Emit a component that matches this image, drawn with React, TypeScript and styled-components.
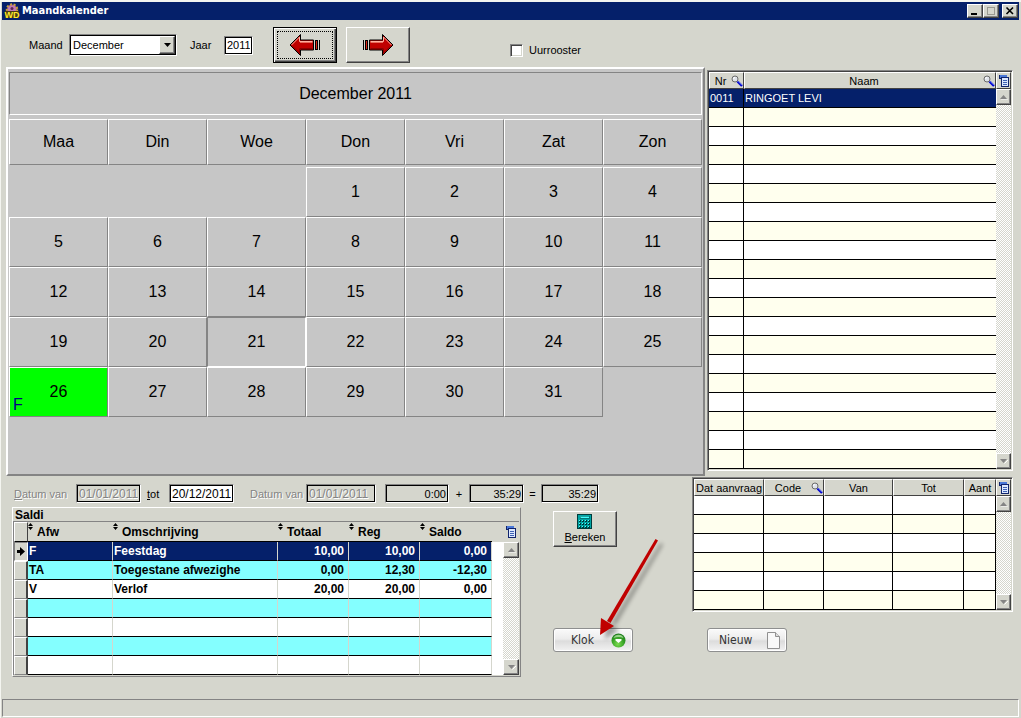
import React, { useState } from 'react';
import styled, { createGlobalStyle, css } from 'styled-components';

const face = '#d5d6cd';
const navy = '#05206a';
const shade = '#848484';
const dark = '#424242';
const panel = '#c6c6c6';
const sans = '"Liberation Sans", Arial, sans-serif';
const caption = '"DejaVu Sans Condensed", "Liberation Sans", sans-serif';

const GlobalStyle = createGlobalStyle`
  *, *::before, *::after { box-sizing: border-box; }
  body { margin: 0; background: ${face}; font: 11px/14px ${sans}; color: #000; }
  button, input, select { font: inherit; color: inherit; margin: 0; }
`;

const raised = css`
  background: ${face};
  border: 1px solid;
  border-color: #fff ${dark} ${dark} #fff;
  box-shadow: inset -1px -1px 0 ${shade};
`;

const Window = styled.div`
  display: flex;
  flex-direction: column;
  min-height: 100vh;
  padding: 2px 2px 1px;
  box-shadow: inset 0 2px 0 #f4f5f0, inset 1px 0 0 #f4f5f0;
`;

const TitleBar = styled.header`
  display: flex;
  align-items: center;
  height: 18px;
  padding: 0 1px 0 2px;
  background: ${navy};
  color: #fff;
`;

const TitleText = styled.h1`
  flex: 1;
  margin: 0 0 0 2px;
  font: bold 11px/18px ${caption};
`;

const CaptionButton = styled.button<{ $apart?: boolean }>`
  ${raised}
  display: grid;
  place-items: center;
  width: 16px;
  height: 14px;
  padding: 0;
  margin-left: ${p => (p.$apart ? 3 : 0)}px;
`;

const Toolbar = styled.div`
  display: flex;
  align-items: center;
  height: 47px;
  padding: 3px 0 0 27px;
`;

const ToolLabel = styled.label<{ $width: number; $gap?: number }>`
  width: ${p => p.$width}px;
  margin-left: ${p => p.$gap ?? 0}px;
`;

const SelectBox = styled.div`
  display: grid;
  grid-template-columns: 1fr 16px;
  width: 108px;
  margin-right: -1px;
  height: 22px;
  border: 1px solid;
  border-color: ${shade} #fff #fff ${shade};
  padding: 1px;
  background: #fff;
  box-shadow: inset 0 0 0 1px #000;
`;

const Select = styled.select`
  grid-area: 1 / 1 / 2 / 3;
  appearance: none;
  border: 0;
  outline: 0;
  background: transparent;
  padding: 0 18px 0 2px;
  min-width: 0;
`;

const SelectArrow = styled.span`
  ${raised}
  grid-area: 1 / 2;
  display: grid;
  place-items: center;
  pointer-events: none;
`;

const Field = styled.input<{ $width: number; $big?: boolean; $right?: boolean; $flat?: boolean }>`
  width: ${p => p.$width}px;
  height: 19px;
  padding: 0 2px;
  border: 1px solid;
  border-color: ${shade} #fff #fff ${shade};
  border-radius: 0;
  outline: 0;
  background: ${p => (p.$flat ? face : '#fff')};
  box-shadow: inset 0 0 0 1px #000;
  font-size: ${p => (p.$big ? 12 : 11)}px;
  text-align: ${p => (p.$right ? 'right' : 'left')};
  &:disabled { color: ${shade}; text-shadow: 1px 1px 0 #fff; }
`;

const PushButton = styled.button<{ $default?: boolean; $gap?: number }>`
  ${raised}
  display: flex;
  flex-direction: column;
  align-items: center;
  justify-content: center;
  width: 64px;
  height: 36px;
  padding: 0;
  margin-left: ${p => p.$gap ?? 0}px;
  ${p => p.$default && css`
    border-color: #000;
    box-shadow: inset 1px 1px 0 #fff, inset -1px -1px 0 ${dark}, inset -2px -2px 0 ${shade};
    outline: 1px dotted #000;
    outline-offset: -5px;
  `}
`;

const CheckLabel = styled.label`
  display: flex;
  align-items: center;
  gap: 6px;
  margin-left: 100px;
  padding-top: 10px;
`;

const CheckBox = styled.input`
  appearance: none;
  width: 13px;
  height: 13px;
  background: #fff;
  border: 1px solid;
  border-color: ${shade} #fff #fff ${shade};
  box-shadow: inset 1px 1px 0 ${dark}, inset -1px -1px 0 ${face};
  &:checked { background: radial-gradient(#000 3px, #fff 3px); }
`;

const Upper = styled.div`
  display: flex;
  align-items: flex-start;
  gap: 2px;
  padding: 0 6px 0 4px;
`;

const Calendar = styled.section`
  flex: 1;
  min-height: 409px;
  padding: 3px 1px;
  background: ${panel};
  border: 2px solid;
  border-color: #fff ${shade} ${shade} #fff;
  font-size: 16px;
  line-height: 20px;
`;

const MonthTitle = styled.h2`
  display: grid;
  place-items: center;
  height: 43px;
  margin: 0 0 4px;
  border: 1px solid;
  border-color: ${shade} #fff #fff ${shade};
  font: inherit;
`;

const Week = styled.div<{ $head?: boolean }>`
  display: grid;
  grid-template-columns: repeat(7, 1fr);
  grid-auto-rows: ${p => (p.$head ? 46 : 50)}px;
  margin-bottom: ${p => (p.$head ? 2 : 0)}px;
`;

const WeekDay = styled.div`
  display: grid;
  place-items: center;
  border: 1px solid;
  border-color: #fff ${shade} ${shade} #fff;
`;

const Day = styled.button<{ $today?: boolean; $holiday?: boolean; $start?: number }>`
  position: relative;
  padding: 0;
  background: ${p => (p.$holiday ? '#00ff00' : 'transparent')};
  border: 1px solid;
  border-color: ${p => (p.$today ? `${shade} #fff #fff ${shade}` : `#fff ${shade} ${shade} #fff`)};
  ${p => p.$start && css`grid-column-start: ${p.$start};`}
`;

const DayCode = styled.span`
  position: absolute;
  left: 3px;
  bottom: 1px;
  color: #000084;
  line-height: 20px;
`;

const GridFrame = styled.div<{ $width: number; $top: number }>`
  display: flex;
  width: ${p => p.$width}px;
  margin-top: ${p => p.$top}px;
  padding: 1px;
  border: 1px solid;
  border-color: ${shade} #fff #fff ${shade};
  box-shadow: inset 1px 1px 0 ${dark}, inset -1px -1px 0 ${face};
`;

const Grid = styled.table`
  flex: 1;
  width: 0;
  table-layout: fixed;
  border-collapse: separate;
  border-spacing: 0;
`;

const HeadCell = styled.th`
  height: 17px;
  padding: 0;
  font-weight: normal;
  background: ${face};
  border: 1px solid;
  border-color: #fff ${dark} ${dark} #fff;
  white-space: nowrap;
`;

const HeadInner = styled.div`
  display: flex;
  align-items: center;
  justify-content: center;
  height: 15px;
  overflow: hidden;
`;

const HeadText = styled.span`
  flex: 1;
  text-align: center;
`;

const Row = styled.tr<{ $cream?: boolean; $active?: boolean }>`
  background: ${p => (p.$active ? navy : p.$cream ? '#ffffee' : '#fff')};
  color: ${p => (p.$active ? '#fff' : '#000')};
`;

const Cell = styled.td<{ $open?: boolean }>`
  height: 19px;
  padding: 0 1px;
  line-height: 18px;
  border-bottom: 1px solid #000;
  border-right: ${p => (p.$open ? 0 : 1)}px solid #000;
`;

const ScrollColumn = styled.div<{ $width: number }>`
  display: flex;
  flex-direction: column;
  width: ${p => p.$width}px;
`;

const MenuButton = styled.button<{ $plain?: boolean }>`
  display: grid;
  place-items: center;
  height: ${p => (p.$plain ? 20 : 17)}px;
  padding: 0;
  background: ${face};
  border: ${p => (p.$plain ? 0 : 1)}px solid;
  border-color: #fff ${dark} ${dark} #fff;
`;

const Track = styled.div`
  flex: 1;
  display: flex;
  flex-direction: column;
  justify-content: space-between;
  background: repeating-conic-gradient(#fff 0 25%, ${face} 0 50%) 0 0 / 2px 2px;
`;

const ScrollButton = styled.button`
  ${raised}
  display: grid;
  place-items: center;
  height: 16px;
  padding: 0;
`;

const Lower = styled.div`
  display: flex;
  flex: 1;
  align-items: flex-start;
  padding: 1px 6px 0 10px;
`;

const LowerLeft = styled.div`
  flex: 1;
`;

const Totals = styled.div`
  display: flex;
  align-items: center;
  padding: 7px 0 4px 2px;
`;

const DateLabel = styled.label<{ $width: number; $indent?: number; $dim?: boolean }>`
  width: ${p => p.$width}px;
  padding-left: ${p => p.$indent ?? 0}px;
  white-space: nowrap;
  ${p => p.$dim && css`color: ${shade}; text-shadow: 1px 1px 0 #fff;`}
`;

const Operator = styled.span<{ $width: number }>`
  width: ${p => p.$width}px;
  text-align: center;
`;

const Work = styled.div`
  display: flex;
  gap: 32px;
`;

const Balance = styled.section`
  flex: 1;
  border: 1px solid;
  border-color: #fff ${shade} ${shade} #fff;
  padding: 0 1px 1px 0;
  font-size: 12px;
  font-weight: bold;
`;

const BalanceTitle = styled.h2`
  height: 13px;
  margin: 0;
  padding-left: 2px;
  font: bold 12px/14px ${sans};
`;

const BalanceBody = styled.div`
  display: flex;
  border: 1px solid ${shade};
  border-width: 1px 0 0 1px;
`;

const BalanceHead = styled.th`
  height: 20px;
  padding: 0;
  border-bottom: 1px solid #000;
  text-align: left;
  white-space: nowrap;
`;

const SortHead = styled.div`
  display: flex;
  align-items: flex-start;
  gap: 4px;
  height: 19px;
  line-height: 20px;
`;

const SelectorCell = styled.td<{ $active?: boolean }>`
  height: 19px;
  padding: 0;
  color: #000;
  background: ${face};
  border: 1px solid;
  border-color: ${p => (p.$active ? `${shade} #fff #fff ${shade}` : `#fff ${dark} ${shade} #fff`)};
  border-right-width: ${p => (p.$active ? 1 : 2)}px;
  line-height: 0;
`;

const SelectorHead = styled.th`
  height: 20px;
  padding: 0;
  border: 1px solid;
  border-color: #fff ${dark} #000 #fff;
`;

const BalanceRow = styled.tr<{ $tint?: boolean; $active?: boolean }>`
  background: ${p => (p.$active ? navy : p.$tint ? '#84ffff' : '#fff')};
  color: ${p => (p.$active ? '#fff' : '#000')};
`;

const BalanceCell = styled.td<{ $num?: boolean }>`
  height: 19px;
  padding: 0 ${p => (p.$num ? 4 : 1)}px 0 1px;
  line-height: 18px;
  text-align: ${p => (p.$num ? 'right' : 'left')};
  white-space: nowrap;
  border-bottom: 1px solid #000;
  border-right: 1px solid ${face};
`;

const Gutter = styled.div`
  width: 11px;
  margin-top: 20px;
  background: #fff;
`;

const SideColumn = styled.div`
  position: relative;
  display: flex;
  flex-direction: column;
  gap: 81px;
  width: 139px;
  padding-top: 4px;
`;

const SoftButton = styled.button`
  display: flex;
  align-items: center;
  justify-content: space-between;
  width: 80px;
  height: 24px;
  padding: 0 6px 0 11px;
  border: 1px solid #8e8f8f;
  border-radius: 3px;
  background: linear-gradient(#fafafa, #ececec 45%, #dcdcdc 55%, #f2f2f2);
  box-shadow: inset 0 0 0 1px #fff;
  font: 12px/16px ${caption};
  color: #333;
`;

const KlokButton = styled(SoftButton)`
  padding-left: 17px;
`;

const Pointer = styled.svg`
  position: absolute;
  left: 42px;
  top: 28px;
  pointer-events: none;
`;

const RequestColumn = styled.div`
  display: flex;
  flex-direction: column;
  gap: 16px;
`;

const RequestActions = styled.div`
  padding-left: 15px;
`;

const StatusBar = styled.footer`
  height: 18px;
  border: 1px solid;
  border-color: ${shade} #fff #fff ${shade};
`;

const LogoIcon = () => (
  <svg width="16" height="16" viewBox="0 0 16 16" aria-hidden="true">
    <circle cx="8" cy="6.500" r="5" fill="#a8549c" stroke="#c9a13a" strokeWidth="2.500" strokeDasharray="2 1.500" />
    <circle cx="8" cy="6.500" r="4" fill="#c07ab4" />
    <circle cx="8" cy="5.500" r="1.500" fill="#5b2257" />
    <rect x="1" y="8" width="14" height="7" fill="#4a3b10" />
    <text x="8" y="15" textAnchor="middle" fontFamily="Liberation Sans" fontWeight="bold" fontSize="9" fill="#ffe92e">WD</text>
  </svg>
);

const ArrowIcon = ({ flip }: { flip?: boolean }) => (
  <svg width="32" height="24" viewBox="0 0 32 24" aria-hidden="true">
    <g transform={flip ? 'translate(32 0) scale(-1 1)' : undefined}>
      <path d="M1 12 L11.500 1.500 V7 H24.500 V17 H11.500 V22.500 Z" fill="#c00000" stroke="#000" />
      <path d="M2.500 12 L10.500 4 V8.500 H23.500" fill="none" stroke="#ffb0a0" />
      <path d="M11 9.500 H23.500" stroke="#e86a5c" />
      <path d="M11 15.500 H23.500 M10.500 15.500 V20 L4 13.500" fill="none" stroke="#8a0000" />
      <rect x="26.500" y="7.500" width="2" height="9" fill="#e02818" stroke="#000" />
      <path d="M30.500 7 V17" stroke="#000" />
    </g>
  </svg>
);

const LensIcon = () => (
  <svg width="12" height="12" viewBox="0 0 12 12" aria-hidden="true">
    <circle cx="4" cy="4" r="3" fill="#dfe3ea" stroke="#6c6c6c" />
    <path d="M2.500 4 A1.500 1.500 0 0 1 4 2.500" fill="none" stroke="#fff" />
    <path d="M6.500 6.500 L11 11" stroke="#0000d0" strokeWidth="2.400" />
    <path d="M7 6.200 L11 10.200" stroke="#8fb0ff" strokeWidth=".7" />
  </svg>
);

const ListIcon = () => (
  <svg width="12" height="12" viewBox="0 0 12 12" shapeRendering="crispEdges" aria-hidden="true">
    <rect x="1" y="0" width="8" height="3" fill="#4a78d8" />
    <path d="M1 3.500 H4 M1.500 0 V3" stroke="#10246c" />
    <rect x="3.500" y="2.500" width="7" height="9" fill="#dce8ff" stroke="#10246c" />
    <path d="M5 5.500 H9 M5 7.500 H9 M5 9.500 H9" stroke="#3e62b4" />
  </svg>
);

const Triangle = ({ up, black }: { up?: boolean; black?: boolean }) => (
  <svg width="9" height="6" viewBox="0 0 9 6" aria-hidden="true">
    {!black && <path d={up ? 'M2 6 H9' : 'M9 2 L5.500 5.500'} stroke="#fff" />}
    <path d={up ? 'M1 5 L4.500 1 L8 5 Z' : 'M1 1 H8 L4.500 5 Z'} fill={black ? '#000' : shade} />
  </svg>
);

const SortIcon = () => (
  <svg width="5" height="8" viewBox="0 0 5 8" aria-hidden="true">
    <path d="M0 4 L2.500 1 L5 4 Z M0 5 L2.500 8 L5 5 Z" fill="#000" />
  </svg>
);

const RowArrow = () => (
  <svg width="11" height="17" viewBox="0 0 11 17" aria-hidden="true">
    <path d="M2 7 H5 V4 L10 8.500 L5 13 V10 H2 Z" fill="#000" />
  </svg>
);

const CalcIcon = () => (
  <svg width="16" height="16" viewBox="0 0 16 16" shapeRendering="crispEdges" aria-hidden="true">
    <rect x=".5" y=".5" width="14" height="14" fill="#00a5a5" stroke="#003c3c" />
    <rect x="3" y="2" width="9" height="2" fill="#4ff" stroke="#004848" strokeWidth=".5" />
    {[6, 9, 12].map(y => [2, 5, 8, 11].map(x => (
      <g key={`${x}-${y}`}>
        <rect x={x} y={y} width="2" height="2" fill="#003c3c" />
        <rect x={x} y={y} width="1" height="1" fill="#5ff" />
      </g>
    )))}
  </svg>
);

const BallIcon = () => (
  <svg width="15" height="15" viewBox="0 0 15 15" aria-hidden="true">
    <defs>
      <radialGradient id="ball" cx=".45" cy=".75" r=".75">
        <stop offset="0" stopColor="#7bdc4f" />
        <stop offset=".6" stopColor="#34a024" />
        <stop offset="1" stopColor="#1c7a1c" />
      </radialGradient>
    </defs>
    <circle cx="7.500" cy="7.500" r="7" fill="url(#ball)" />
    <path d="M2.500 5 A5.500 5.500 0 0 1 12.500 5 Q7.500 3 2.500 5 Z" fill="#c9efb8" opacity=".7" />
    <path d="M4.500 6 H10.500 V7.500 L7.500 10 L4.500 7.500 Z" fill="#fff" />
  </svg>
);

const PageIcon = () => (
  <svg width="13" height="17" viewBox="0 0 13 17" aria-hidden="true">
    <path d="M.5 .5 H8.500 L12.500 4.500 V16.500 H.5 Z" fill="#f8f8f8" stroke="#909090" />
    <path d="M8.500 .5 V4.500 H12.500" fill="#ddd" stroke="#909090" />
  </svg>
);

const Scroller = ({ width, plain }: { width: number; plain?: boolean }) => (
  <ScrollColumn $width={width}>
    <MenuButton $plain={plain} aria-label="Kolommen"><ListIcon /></MenuButton>
    <Track>
      <ScrollButton aria-label="Omhoog"><Triangle up /></ScrollButton>
      <ScrollButton aria-label="Omlaag"><Triangle /></ScrollButton>
    </Track>
  </ScrollColumn>
);

const Heading = ({ text, lens }: { text: string; lens?: boolean }) => (
  <HeadCell scope="col">
    <HeadInner><HeadText>{text}</HeadText>{lens && <LensIcon />}</HeadInner>
  </HeadCell>
);

const weekDays = ['Maa', 'Din', 'Woe', 'Don', 'Vri', 'Zat', 'Zon'];
const months = ['Januari', 'Februari', 'Maart', 'April', 'Mei', 'Juni', 'Juli', 'Augustus', 'September', 'Oktober', 'November', 'December'];
const days = Array.from({ length: 31 }, (_, i) => i + 1);
const balances = [
  ['F', 'Feestdag', '10,00', '10,00', '0,00'],
  ['TA', 'Toegestane afwezighe', '0,00', '12,30', '-12,30'],
  ['V', 'Verlof', '20,00', '20,00', '0,00'],
  ...Array.from({ length: 4 }, () => ['', '', '', '', '']),
];
const people = [['0011', 'RINGOET LEVI'], ...Array.from({ length: 19 }, () => ['', ''])];

export default function App() {
  const [month, setMonth] = useState('December');
  return (
    <Window>
      <GlobalStyle />
      <TitleBar>
        <LogoIcon />
        <TitleText>Maandkalender</TitleText>
        <CaptionButton aria-label="Minimaliseren">
          <svg width="10" height="10"><rect x="1" y="7" width="6" height="2" /></svg>
        </CaptionButton>
        <CaptionButton aria-label="Maximaliseren" disabled>
          <svg width="10" height="10"><path d="M1 1.500 H9 M1.500 1 V9 M8.500 1 V9 M1 8.500 H9" stroke="#9a9a92" /></svg>
        </CaptionButton>
        <CaptionButton aria-label="Sluiten" $apart>
          <svg width="10" height="10"><path d="M1.500 1.500 L8 8 M8 1.500 L1.500 8" stroke="#000" strokeWidth="1.600" /></svg>
        </CaptionButton>
      </TitleBar>

      <Toolbar>
        <ToolLabel htmlFor="month" $width={40}>Maand</ToolLabel>
        <SelectBox>
          <Select id="month" value={month} onChange={e => setMonth(e.target.value)}>
            {months.map(m => <option key={m}>{m}</option>)}
          </Select>
          <SelectArrow><Triangle black /></SelectArrow>
        </SelectBox>
        <ToolLabel htmlFor="year" $width={34} $gap={14}>Jaar</ToolLabel>
        <Field id="year" $width={29} defaultValue="2011" />
        <PushButton $default $gap={20} aria-label="Vorige maand"><ArrowIcon /></PushButton>
        <PushButton $gap={9} aria-label="Volgende maand"><ArrowIcon flip /></PushButton>
        <CheckLabel><CheckBox type="checkbox" />Uurrooster</CheckLabel>
      </Toolbar>

      <Upper>
        <Calendar>
          <MonthTitle>{month} 2011</MonthTitle>
          <Week $head>{weekDays.map(d => <WeekDay key={d}>{d}</WeekDay>)}</Week>
          <Week>
            {days.map(d => (
              <Day key={d} $start={d === 1 ? 4 : undefined} $today={d === 21} $holiday={d === 26}>
                {d}
                {d === 26 && <DayCode>F</DayCode>}
              </Day>
            ))}
          </Week>
        </Calendar>
        <GridFrame $width={306} $top={3}>
          <Grid>
            <colgroup><col width="35" /><col /></colgroup>
            <thead><tr><Heading text="Nr" lens /><Heading text="Naam" lens /></tr></thead>
            <tbody>
              {people.map(([nr, name], i) => (
                <Row key={i} $active={i === 0} $cream={i % 2 === 1}>
                  <Cell>{nr}</Cell>
                  <Cell $open>{name}</Cell>
                </Row>
              ))}
            </tbody>
          </Grid>
          <Scroller width={15} />
        </GridFrame>
      </Upper>

      <Lower>
        <LowerLeft>
          <Totals>
            <DateLabel htmlFor="from" $width={62} $dim><u>D</u>atum van</DateLabel>
            <Field id="from" $width={65} $big $flat disabled defaultValue="01/01/2011" />
            <DateLabel htmlFor="to" $width={28} $indent={6}><u>t</u>ot</DateLabel>
            <Field id="to" $width={65} $big defaultValue="20/12/2011" />
            <DateLabel htmlFor="from2" $width={72} $indent={16} $dim>Datum van</DateLabel>
            <Field id="from2" $width={70} $big $flat disabled defaultValue="01/01/2011" />
            <Operator $width={9} />
            <Field aria-label="Beginsaldo" $width={64} $flat $right readOnly value="0:00" />
            <Operator $width={20}>+</Operator>
            <Field aria-label="Bijgeteld" $width={55} $flat $right readOnly value="35:29" />
            <Operator $width={17}>=</Operator>
            <Field aria-label="Eindsaldo" $width={58} $flat $right readOnly value="35:29" />
          </Totals>
          <Work>
            <Balance>
              <BalanceTitle>Saldi</BalanceTitle>
              <BalanceBody>
                <Grid>
                  <colgroup>
                    <col width="14" /><col width="85" /><col /><col width="71" /><col width="71" /><col width="72" />
                  </colgroup>
                  <thead>
                    <tr>
                      <SelectorHead />
                      {['Afw', 'Omschrijving', 'Totaal', 'Reg', 'Saldo'].map(h => (
                        <BalanceHead key={h} scope="col"><SortHead><SortIcon />{h}</SortHead></BalanceHead>
                      ))}
                    </tr>
                  </thead>
                  <tbody>
                    {balances.map((cells, i) => (
                      <BalanceRow key={i} $active={i === 0} $tint={i % 2 === 1}>
                        <SelectorCell $active={i === 0}>{i === 0 && <RowArrow />}</SelectorCell>
                        {cells.map((c, j) => <BalanceCell key={j} $num={j > 1}>{c}</BalanceCell>)}
                      </BalanceRow>
                    ))}
                  </tbody>
                </Grid>
                <Gutter />
                <Scroller width={16} plain />
              </BalanceBody>
            </Balance>
            <SideColumn>
              <PushButton><CalcIcon /><span><u>B</u>ereken</span></PushButton>
              <KlokButton>Klok<BallIcon /></KlokButton>
              <Pointer width="82" height="110" viewBox="0 0 82 110" aria-hidden="true">
                <defs>
                  <filter id="soft" x="-20%" y="-20%" width="140%" height="140%"><feGaussianBlur stdDeviation="2" /></filter>
                </defs>
                <g filter="url(#soft)" opacity=".35" transform="translate(5 4)">
                  <path d="M60.500 4 L63 5.500 L15.500 86 L12 84 Z" fill="#000" />
                  <path d="M5 100 L6 83 L19 91 Z" fill="#000" />
                </g>
                <path d="M60.500 4 L63 5.500 L15.500 88 L12 86 Z" fill="#c00000" />
                <path d="M5 100 L6 83 L19 91 Z" fill="#c00000" />
              </Pointer>
            </SideColumn>
          </Work>
        </LowerLeft>
        <RequestColumn>
          <GridFrame $width={321} $top={0}>
            <Grid>
              <colgroup><col width="70" /><col width="60" /><col width="69" /><col width="71" /><col width="32" /></colgroup>
              <thead>
                <tr>
                  <Heading text="Dat aanvraag" /><Heading text="Code" lens /><Heading text="Van" />
                  <Heading text="Tot" /><Heading text="Aant" />
                </tr>
              </thead>
              <tbody>
                {Array.from({ length: 6 }, (_, i) => (
                  <Row key={i} $cream={i % 2 === 1}>
                    {Array.from({ length: 5 }, (_, j) => <Cell key={j} />)}
                  </Row>
                ))}
              </tbody>
            </Grid>
            <Scroller width={15} />
          </GridFrame>
          <RequestActions>
            <SoftButton>Nieuw<PageIcon /></SoftButton>
          </RequestActions>
        </RequestColumn>
      </Lower>
      <StatusBar />
    </Window>
  );
}
